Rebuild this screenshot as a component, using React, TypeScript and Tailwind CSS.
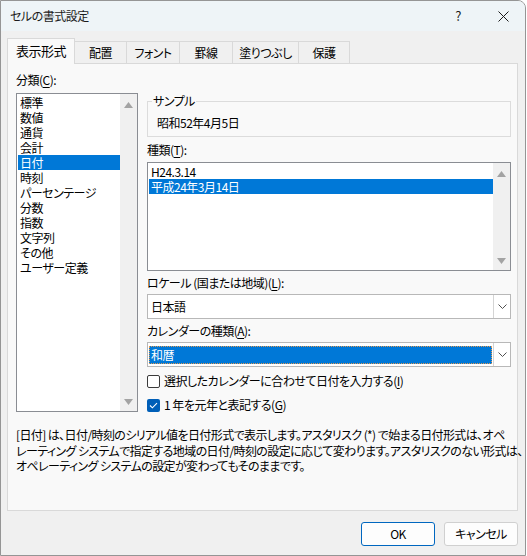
const CATEGORIES = [
  "標準",
  "数値",
  "通貨",
  "会計",
  "日付",
  "時刻",
  "パーセンテージ",
  "分数",
  "指数",
  "文字列",
  "その他",
  "ユーザー定義",
];

const TYPES = ["H24.3.14", "平成24年3月14日"];

const TABS: { label: string; w: string; active?: boolean }[] = [
  { label: "表示形式", w: "w-[68px]", active: true },
  { label: "配置", w: "w-[53px]" },
  { label: "フォント", w: "w-[54px]" },
  { label: "罫線", w: "w-[54px]" },
  { label: "塗りつぶし", w: "w-[67px]" },
  { label: "保護", w: "w-[52px]" },
];

function Arrow({ down }: { down?: boolean }) {
  return (
    <svg width="9" height="6" viewBox="0 0 9 6" className="block">
      <path d={down ? "M0 0 L9 0 L4.5 6 Z" : "M0 6 L9 6 L4.5 0 Z"} fill="#a3a3a3" />
    </svg>
  );
}

function ScrollBar() {
  return (
    <div className="flex w-[17px] shrink-0 flex-col items-center justify-between bg-[#f0f0f0] pt-[8px] pb-[6px]">
      <Arrow />
      <Arrow down />
    </div>
  );
}

function Chevron() {
  return (
    <svg width="9" height="5" viewBox="0 0 9 5" className="block">
      <path d="M0.5 0.5 L4.5 4.5 L8.5 0.5" fill="none" stroke="#505050" strokeWidth="1" />
    </svg>
  );
}

function Combo({ value, selected }: { value: string; selected?: boolean }) {
  return (
    <div className="flex h-[25px] border border-[#b8b8b8] bg-white">
      <div className="flex flex-1 items-center px-px">
        {selected ? (
          <div className="flex h-[18px] w-full items-center border border-dotted border-[#e39a52] bg-[#0078d7] pl-[1px] text-white">
            {value}
          </div>
        ) : (
          <span className="pl-[2px]">{value}</span>
        )}
      </div>
      <div className="flex w-[17px] items-center justify-center border-l border-[#d4d4d4] bg-white">
        <Chevron />
      </div>
    </div>
  );
}

function CheckBox({ checked, label }: { checked?: boolean; label: React.ReactNode }) {
  return (
    <div className="flex h-[16px] items-center gap-[4px]">
      {checked ? (
        <span className="flex h-[13px] w-[13px] items-center justify-center rounded-[2px] bg-[#005fb8]">
          <svg width="9" height="7" viewBox="0 0 9 7">
            <path d="M1 3.5 L3.4 5.8 L8 1.2" fill="none" stroke="white" strokeWidth="1.1" />
          </svg>
        </span>
      ) : (
        <span className="h-[13px] w-[13px] rounded-[2px] border border-[#3b3b3b] bg-white" />
      )}
      <span>{label}</span>
    </div>
  );
}

export default function App() {
  return (
    <div className="h-[556px] w-[527px] bg-white font-['Noto_Sans_CJK_JP','Noto_Sans',sans-serif] text-[12px] leading-[16px] tracking-[-0.5px] text-black [font-feature-settings:'palt']">
      <div className="flex h-[556px] w-[526px] flex-col overflow-hidden rounded-tr-[8px] border border-[#959595] bg-[#f0f0f0]">
        {/* title bar */}
        <div className="flex h-[30px] shrink-0 items-center bg-[#eef4f7] pl-[9px] text-[#1b1b1b]">
          <span className="flex-1">セルの書式設定</span>
          <span className="mr-[37px] text-[13px]">?</span>
          <svg width="11" height="11" viewBox="0 0 11 11" className="mr-[16px]">
            <path d="M0.5 0.5 L10.5 10.5 M10.5 0.5 L0.5 10.5" stroke="#1b1b1b" strokeWidth="1" />
          </svg>
        </div>

        {/* tabs */}
        <div className="mt-[7px] flex h-[25px] items-end pl-[6px]">
          {TABS.map((t) =>
            t.active ? (
              <div
                key={t.label}
                className={`relative z-10 -mb-px flex h-[26px] ${t.w} items-center justify-center border border-b-0 border-[#d9d9d9] bg-[#f9f9f9] pb-[2px] text-[13px]`}
              >
                {t.label}
              </div>
            ) : (
              <div
                key={t.label}
                className={`-ml-px flex h-[22px] ${t.w} items-center justify-center border border-b-0 border-[#d9d9d9] bg-[#f0f0f0]`}
              >
                {t.label}
              </div>
            ),
          )}
        </div>

        {/* panel */}
        <div className="ml-[6px] flex h-[448px] w-[511px] flex-col border border-[#d9d9d9] bg-[#f9f9f9] pt-[8px] pl-[8px]">
          <div className="flex">
            {/* category list */}
            <div className="flex w-[122px] flex-col">
              <div className="h-[16px]">
                分類(<span className="underline underline-offset-2">C</span>):
              </div>
              <div className="mt-[5px] flex h-[319px] border border-[#8a8d93] bg-white">
                <div className="flex flex-1 flex-col pt-[1px] pl-px">
                  {CATEGORIES.map((c) => (
                    <div
                      key={c}
                      className={`h-[15px] pl-[2px] leading-[15px] ${c === "日付" ? "bg-[#0078d7] text-white" : ""}`}
                    >
                      {c}
                    </div>
                  ))}
                </div>
                <ScrollBar />
              </div>
            </div>

            {/* right side */}
            <div className="ml-[9px] flex w-[364px] flex-col">
              <div className="relative mt-[29px] h-[36px] border border-[#dcdcdc] pt-[13px] pl-[9px]">
                <span className="absolute -top-[9px] left-[4px] bg-[#f9f9f9] px-[1px]">サンプル</span>
                昭和52年4月5日
              </div>

              <div className="mt-[5px] h-[16px]">
                種類(<span className="underline underline-offset-2">T</span>):
              </div>
              <div className="mt-[4px] flex h-[109px] border border-[#8a8d93] bg-white">
                <div className="flex flex-1 flex-col pt-[1px] pl-px">
                  {TYPES.map((t, i) => (
                    <div
                      key={t}
                      className={`h-[15px] pl-[2px] leading-[15px] ${i === 1 ? "bg-[#0078d7] text-white" : ""}`}
                    >
                      {t}
                    </div>
                  ))}
                </div>
                <ScrollBar />
              </div>

              <div className="mt-[4px] h-[16px]">
                ロケール (国または地域)(<span className="underline underline-offset-2">L</span>):
              </div>
              <div className="mt-[3px]">
                <Combo value="日本語" />
              </div>

              <div className="mt-[4px] h-[16px]">
                カレンダーの種類(<span className="underline underline-offset-2">A</span>):
              </div>
              <div className="mt-[3px]">
                <Combo value="和暦" selected />
              </div>

              <div className="mt-[6px]">
                <CheckBox
                  label={
                    <>
                      選択したカレンダーに合わせて日付を入力する(<span className="underline underline-offset-2">I</span>)
                    </>
                  }
                />
              </div>
              <div className="mt-[8px]">
                <CheckBox
                  checked
                  label={
                    <>
                      1 年を元年と表記する(<span className="underline underline-offset-2">G</span>)
                    </>
                  }
                />
              </div>
            </div>
          </div>

          <p className="mt-[14px] leading-[15.5px] tracking-[-0.6px] whitespace-nowrap">
            [日付] は、日付/時刻のシリアル値を日付形式で表示します。アスタリスク (*) で始まる日付形式は、オペ
            <br />
            レーティング システムで指定する地域の日付/時刻の設定に応じて変わります。アスタリスクのない形式は、
            <br />
            オペレーティング システムの設定が変わってもそのままです。
          </p>
        </div>

        {/* buttons */}
        <div className="mt-[11px] flex justify-end gap-[9px] pr-[7px]">
          <button className="h-[24px] w-[74px] rounded-[3px] border border-[#0067c0] bg-[#fdfdfd]">OK</button>
          <button className="h-[24px] w-[74px] rounded-[3px] border border-[#d0d0d0] bg-[#fdfdfd]">キャンセル</button>
        </div>
      </div>
    </div>
  );
}
